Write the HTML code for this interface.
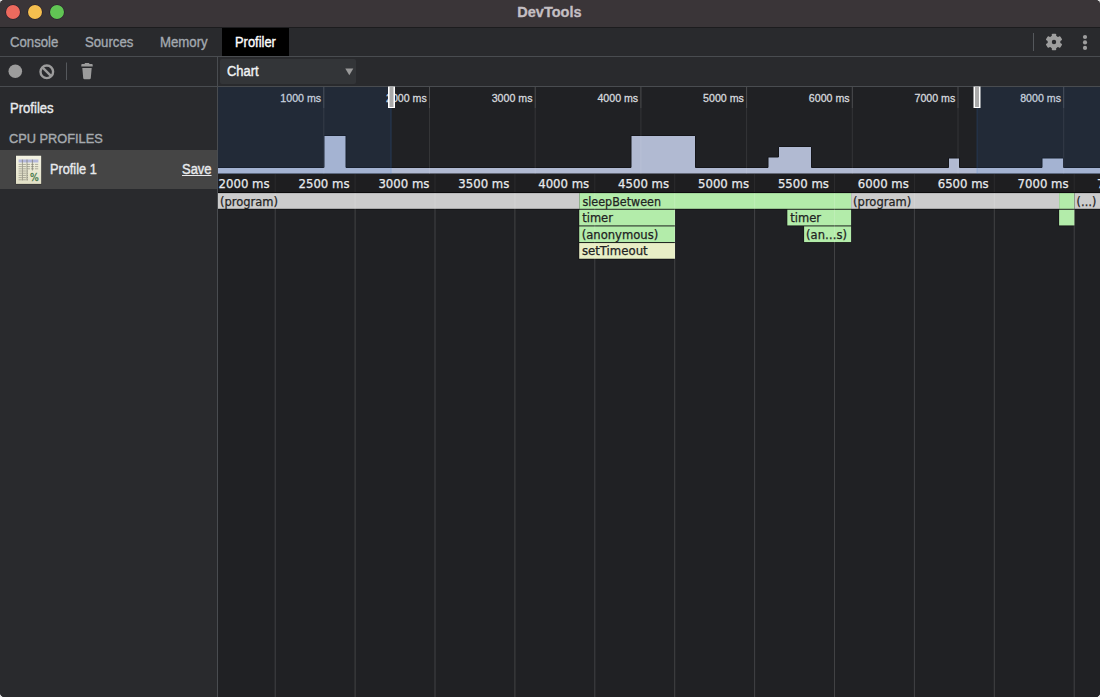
<!DOCTYPE html>
<html lang="en">
<head>
<meta charset="utf-8">
<title>DevTools</title>
<style>
*{box-sizing:border-box;margin:0;padding:0}
html,body{width:1100px;height:697px;overflow:hidden;background:#e2e2e2}
body{font-family:"Liberation Sans",Arial,sans-serif;font-size:14px;color:#e8eaed;position:relative}
.abs{position:absolute}
#win{position:absolute;left:0;top:0;width:1100px;height:697px;background:#202124;border-radius:4.5px;overflow:hidden}
#titlebar{left:0;top:0;width:1100px;height:27px;background:#3a3538}
#titleline{left:0;top:27px;width:1100px;height:1px;background:#1c1c1e}
#title{left:0;top:0;width:1100px;height:27px;line-height:24px;text-align:center;font-weight:bold;font-size:14.5px;color:#c4bfc3;padding-right:1.2px;-webkit-text-stroke:.3px}
.dot{position:absolute;top:4.9px;width:14px;height:14px;border-radius:50%;box-shadow:0 0 0 .6px rgba(20,10,30,.55)}
#tabbar{left:0;top:28px;width:1100px;height:28px;background:#292a2d}
#tabline{left:0;top:56px;width:1100px;height:1px;background:#494c50}
.tab{position:absolute;top:28.7px;height:28px;line-height:27px;font-size:14px;color:#a3a9b0;white-space:nowrap;transform-origin:0 50%;-webkit-text-stroke:.35px}
#tabsel{left:222px;top:28px;width:67px;height:28px;background:#000}
#toolbar{left:0;top:57px;width:1100px;height:29px;background:#292a2d}
#toolline{left:0;top:86px;width:1100px;height:1px;background:#494c50}
#sidebar{left:0;top:87px;width:217px;height:610px;background:#292a2d}
#sideline{left:216.8px;top:57px;width:1.4px;height:640px;background:#494c50}
#selrow{left:0;top:150.4px;width:217px;height:38.3px;background:#454545}
.t{position:absolute;white-space:nowrap;transform-origin:0 50%;-webkit-text-stroke:.4px}
#main{left:218px;top:87px;width:882px;height:610px;background:#202124}
.fl{font-family:"DejaVu Sans","Liberation Sans",sans-serif}
</style>
</head>
<body>
<div id="win">
  <div id="titlebar" class="abs"></div>
  <div id="titleline" class="abs"></div>
  <div id="title" class="abs">DevTools</div>
  <div class="dot" style="left:6px;background:#ed6a5e"></div>
  <div class="dot" style="left:28px;background:#f5bf4f"></div>
  <div class="dot" style="left:50px;background:#61c554"></div>

  <div id="tabbar" class="abs"></div>
  <div id="tabline" class="abs"></div>
  <div id="tabsel" class="abs"></div>
  <div class="tab" style="left:10.2px;transform:scaleX(.94)">Console</div>
  <div class="tab" style="left:85.2px;transform:scaleX(.94)">Sources</div>
  <div class="tab" style="left:160.4px;transform:scaleX(.943)">Memory</div>
  <div class="tab" style="left:235px;color:#fff;transform:scaleX(.921)">Profiler</div>

  <div id="toolbar" class="abs"></div>
  <div id="toolline" class="abs"></div>
  <div id="sidebar" class="abs"></div>
  <div id="selrow" class="abs"></div>
  <div id="sideline" class="abs"></div>

  <div class="t" style="left:10px;top:99.5px;font-size:14.3px;color:#e8eaed;transform:scaleX(.915)">Profiles</div>
  <div class="t" style="left:8.6px;top:131px;font-size:13.6px;color:#a6aaaf;transform:scaleX(.94)">CPU PROFILES</div>
  <div class="t" style="left:49.6px;top:161px;font-size:14px;color:#e8eaed;transform:scaleX(.91)">Profile 1</div>
  <div class="t" style="left:181.8px;top:161px;font-size:14px;color:#e8eaed;text-decoration:underline;transform:scaleX(.925)">Save</div>


  <!-- toolbar icons -->
  <svg class="abs" style="left:0;top:57px" width="217" height="29" viewBox="0 57 217 29">
    <circle cx="15.3" cy="71.3" r="6.8" fill="#9c9c9c"/>
    <circle cx="46.8" cy="71.8" r="6.3" fill="none" stroke="#9c9c9c" stroke-width="2.4"/>
    <line x1="42.4" y1="67.4" x2="51.2" y2="76.2" stroke="#9c9c9c" stroke-width="2.4"/>
    <rect x="66" y="62.5" width="1" height="17.5" fill="#55585c"/>
    <path d="M85.2 63h3.6l0.9 1.1h2.2a0.8 0.8 0 0 1 .8 .8v1.6h-11.4v-1.6a0.8 0.8 0 0 1 .8-.8h2.2z M82.3 68h9.4l-0.9 9.9a1.4 1.4 0 0 1-1.4 1.3h-4.8a1.4 1.4 0 0 1-1.4-1.3z" fill="#9c9c9c"/>
  </svg>
  <div class="abs" id="select" style="left:220px;top:59px;width:135.5px;height:24.5px;background:#333538;border-radius:2px"></div>
  <div class="t" style="left:226.7px;top:62.5px;font-size:14px;color:#f1f3f4;transform:scaleX(.925)">Chart</div>
  <svg class="abs" style="left:345px;top:67.5px" width="9" height="8" viewBox="0 0 9 8"><path d="M0.3 0.4h8L4.3 7.2z" fill="#9a9a9a"/></svg>
  <!-- right tabbar icons -->
  <div class="abs" style="left:1033px;top:33px;width:1px;height:17.5px;background:#55585c"></div>
  <svg class="abs" style="left:1043px;top:31.2px" width="22" height="22" viewBox="-11 -11 22 22">
    <g fill="#9e9e9e">
      <path fill-rule="evenodd" d="M0-6.4A6.4 6.4 0 1 1 0 6.4A6.4 6.4 0 1 1 0-6.4zM0-2.2A2.2 2.2 0 1 0 0 2.2A2.2 2.2 0 1 0 0-2.2z"/>
      <g><rect x="-2.2" y="-8.3" width="4.4" height="3.6" rx="0.8"/><rect x="-2.2" y="4.7" width="4.4" height="3.6" rx="0.8"/></g>
      <g transform="rotate(60)"><rect x="-2.2" y="-8.3" width="4.4" height="3.6" rx="0.8"/><rect x="-2.2" y="4.7" width="4.4" height="3.6" rx="0.8"/></g>
      <g transform="rotate(120)"><rect x="-2.2" y="-8.3" width="4.4" height="3.6" rx="0.8"/><rect x="-2.2" y="4.7" width="4.4" height="3.6" rx="0.8"/></g>
    </g>
  </svg>
  <svg class="abs" style="left:1078px;top:30px" width="14" height="24" viewBox="1078 30 14 24">
    <circle cx="1085" cy="37" r="2.1" fill="#9e9e9e"/><circle cx="1085" cy="42.4" r="2.1" fill="#9e9e9e"/><circle cx="1085" cy="47.9" r="2.1" fill="#9e9e9e"/>
  </svg>
  <!-- profile icon -->
  <svg class="abs" style="left:14px;top:153px" width="30" height="34" viewBox="14 153 30 34">
    <defs><linearGradient id="pg" x1="0" y1="0" x2="0" y2="1"><stop offset="0" stop-color="#f4f3e3"/><stop offset="1" stop-color="#e2e0c6"/></linearGradient></defs>
    <rect x="15.6" y="155.4" width="26" height="29.2" fill="#2a2a2a" opacity=".55"/>
    <rect x="16" y="155.7" width="25.2" height="28.2" fill="url(#pg)"/>
    <rect x="18.6" y="159.5" width="19.8" height="3" fill="#b4b8dc"/>
    <g stroke="#8f8e80" stroke-width="0.7" stroke-dasharray="3.2 0.9">
      <line x1="18.6" y1="164.4" x2="38.4" y2="164.4"/><line x1="18.6" y1="166.6" x2="38.4" y2="166.6"/><line x1="18.6" y1="168.8" x2="38.4" y2="168.8"/>
      <line x1="18.6" y1="171" x2="28" y2="171"/><line x1="18.6" y1="173.2" x2="28" y2="173.2"/><line x1="18.6" y1="175.4" x2="28" y2="175.4"/>
      <line x1="18.6" y1="177.6" x2="28" y2="177.6"/><line x1="18.6" y1="179.8" x2="28" y2="179.8"/>
    </g>
    <g stroke="#77766b" stroke-width="0.65">
      <line x1="22.4" y1="159.5" x2="22.4" y2="180.5"/><line x1="27" y1="159.5" x2="27" y2="180.5"/><line x1="32.4" y1="159.5" x2="32.4" y2="170.5"/>
    </g>
    <text x="30.1" y="180.5" font-family="DejaVu Sans, sans-serif" font-size="9.8" fill="#44784a" stroke="#44784a" stroke-width=".3" textLength="8.8" lengthAdjust="spacingAndGlyphs">%</text>
  </svg>
  <div id="main" class="abs"></div>
<!--CHART-->
<svg id="chart" class="abs" style="left:0;top:0" width="1100" height="697" viewBox="0 0 1100 697">
<rect x="218" y="87" width="882" height="87" fill="#202124"/>
<clipPath id="cm"><rect x="218" y="87" width="882" height="610"/></clipPath>
<path d="M210 167.5 L324 167.5 L324 135.5 L346 135.5 L346 167.5 L631 167.5 L631 135.5 L695.5 135.5 L695.5 167.5 L768 167.5 L768 157.0 L778.5 157.0 L778.5 146.5 L811.5 146.5 L811.5 167.5 L948.5 167.5 L948.5 158.0 L959.5 158.0 L959.5 167.5 L1042 167.5 L1042 158.0 L1063.5 158.0 L1063.5 167.5 L1110 167.5 L1110 174 L210 174Z" fill="#b1bad2" stroke="#15161a" stroke-width="1" clip-path="url(#cm)"/>
<rect x="323.3" y="87" width="1" height="21" fill="#fff" fill-opacity=".2"/>
<rect x="323.3" y="108" width="1" height="66" fill="#fff" fill-opacity=".09"/>
<rect x="429.0" y="87" width="1" height="21" fill="#fff" fill-opacity=".2"/>
<rect x="429.0" y="108" width="1" height="66" fill="#fff" fill-opacity=".09"/>
<rect x="534.7" y="87" width="1" height="21" fill="#fff" fill-opacity=".2"/>
<rect x="534.7" y="108" width="1" height="66" fill="#fff" fill-opacity=".09"/>
<rect x="640.4" y="87" width="1" height="21" fill="#fff" fill-opacity=".2"/>
<rect x="640.4" y="108" width="1" height="66" fill="#fff" fill-opacity=".09"/>
<rect x="746.1" y="87" width="1" height="21" fill="#fff" fill-opacity=".2"/>
<rect x="746.1" y="108" width="1" height="66" fill="#fff" fill-opacity=".09"/>
<rect x="851.8" y="87" width="1" height="21" fill="#fff" fill-opacity=".2"/>
<rect x="851.8" y="108" width="1" height="66" fill="#fff" fill-opacity=".09"/>
<rect x="957.5" y="87" width="1" height="21" fill="#fff" fill-opacity=".2"/>
<rect x="957.5" y="108" width="1" height="66" fill="#fff" fill-opacity=".09"/>
<rect x="1063.2" y="87" width="1" height="21" fill="#fff" fill-opacity=".2"/>
<rect x="1063.2" y="108" width="1" height="66" fill="#fff" fill-opacity=".09"/>
<g font-family="Liberation Sans, Arial, sans-serif" font-size="11.4" fill="#d6d9de" stroke="#d6d9de" stroke-width=".3" text-anchor="end">
<text x="321.1" y="101.5" textLength="40.8" lengthAdjust="spacingAndGlyphs">1000 ms</text>
<text x="426.8" y="101.5" textLength="40.8" lengthAdjust="spacingAndGlyphs">2000 ms</text>
<text x="532.5" y="101.5" textLength="40.8" lengthAdjust="spacingAndGlyphs">3000 ms</text>
<text x="638.2" y="101.5" textLength="40.8" lengthAdjust="spacingAndGlyphs">4000 ms</text>
<text x="743.9" y="101.5" textLength="40.8" lengthAdjust="spacingAndGlyphs">5000 ms</text>
<text x="849.6" y="101.5" textLength="40.8" lengthAdjust="spacingAndGlyphs">6000 ms</text>
<text x="955.3" y="101.5" textLength="40.8" lengthAdjust="spacingAndGlyphs">7000 ms</text>
<text x="1061.0" y="101.5" textLength="40.8" lengthAdjust="spacingAndGlyphs">8000 ms</text>
</g>
<rect x="218" y="87" width="173.5" height="87" fill="#3879d9" fill-opacity=".105"/>
<rect x="977" y="87" width="123" height="87" fill="#3879d9" fill-opacity=".105"/>
<rect x="390.5" y="87" width="1" height="87" fill="#3879d9" fill-opacity=".2"/>
<rect x="976.5" y="87" width="1" height="87" fill="#3879d9" fill-opacity=".2"/>
<rect x="388" y="86.5" width="7" height="21.5" fill="#fff"/>
<rect x="389.5" y="87" width="4" height="20" fill="#aaa"/>
<rect x="973.5" y="86.5" width="7" height="21.5" fill="#fff"/>
<rect x="975.0" y="87" width="4" height="20" fill="#aaa"/>
<rect x="218" y="174" width="882" height="18.5" fill="#1e1e20"/>
<rect x="218" y="192.5" width="882" height="505" fill="#202124"/>
<rect x="218" y="192" width="882" height="1.1" fill="#0c0c0d"/>
<rect x="218.00" y="193.10" width="361.40" height="16.5" fill="#111113"/>
<rect x="578.80" y="193.10" width="272.30" height="16.5" fill="#111113"/>
<rect x="850.50" y="193.10" width="208.60" height="16.5" fill="#111113"/>
<rect x="1058.50" y="193.10" width="15.90" height="16.5" fill="#111113"/>
<rect x="1074.00" y="193.10" width="26.00" height="16.5" fill="#111113"/>
<rect x="578.60" y="209.75" width="96.40" height="16.5" fill="#111113"/>
<rect x="786.70" y="209.75" width="64.40" height="16.5" fill="#111113"/>
<rect x="1058.50" y="209.75" width="15.90" height="16.5" fill="#111113"/>
<rect x="578.60" y="226.40" width="96.40" height="16.5" fill="#111113"/>
<rect x="803.50" y="226.40" width="47.60" height="16.5" fill="#111113"/>
<rect x="578.60" y="243.05" width="96.40" height="16.5" fill="#111113"/>
<rect x="218" y="193.1" width="361.4" height="15.7" fill="#cccccc"/>
<rect x="579.4" y="193.1" width="271.70000000000005" height="15.7" fill="#b3ecaa"/>
<rect x="851.1" y="193.1" width="207.9999999999999" height="15.7" fill="#cccccc"/>
<rect x="1059.1" y="193.1" width="15.300000000000182" height="15.7" fill="#b3ecaa"/>
<rect x="1074.6" y="193.1" width="25.40000000000009" height="15.7" fill="#cccccc"/>
<rect x="579.2" y="209.75" width="95.79999999999995" height="15.7" fill="#b3ecaa"/>
<rect x="787.3" y="209.75" width="63.80000000000007" height="15.7" fill="#b3ecaa"/>
<rect x="1059.1" y="209.75" width="15.300000000000182" height="15.7" fill="#b3ecaa"/>
<rect x="579.2" y="226.39999999999998" width="95.79999999999995" height="15.7" fill="#b3ecaa"/>
<rect x="804.1" y="226.39999999999998" width="47.0" height="15.7" fill="#b3ecaa"/>
<rect x="579.2" y="243.04999999999998" width="95.79999999999995" height="15.7" fill="#e8eec6"/>
<rect x="274.7" y="174" width="1" height="18" fill="#fff" fill-opacity=".06"/>
<rect x="274.7" y="193" width="1" height="504" fill="#fff" fill-opacity=".15"/>
<rect x="354.6" y="174" width="1" height="18" fill="#fff" fill-opacity=".06"/>
<rect x="354.6" y="193" width="1" height="504" fill="#fff" fill-opacity=".15"/>
<rect x="434.5" y="174" width="1" height="18" fill="#fff" fill-opacity=".06"/>
<rect x="434.5" y="193" width="1" height="504" fill="#fff" fill-opacity=".15"/>
<rect x="514.4" y="174" width="1" height="18" fill="#fff" fill-opacity=".06"/>
<rect x="514.4" y="193" width="1" height="504" fill="#fff" fill-opacity=".15"/>
<rect x="594.3" y="174" width="1" height="18" fill="#fff" fill-opacity=".06"/>
<rect x="594.3" y="193" width="1" height="504" fill="#fff" fill-opacity=".15"/>
<rect x="674.2" y="174" width="1" height="18" fill="#fff" fill-opacity=".06"/>
<rect x="674.2" y="193" width="1" height="504" fill="#fff" fill-opacity=".15"/>
<rect x="754.1" y="174" width="1" height="18" fill="#fff" fill-opacity=".06"/>
<rect x="754.1" y="193" width="1" height="504" fill="#fff" fill-opacity=".15"/>
<rect x="834.0" y="174" width="1" height="18" fill="#fff" fill-opacity=".06"/>
<rect x="834.0" y="193" width="1" height="504" fill="#fff" fill-opacity=".15"/>
<rect x="913.9" y="174" width="1" height="18" fill="#fff" fill-opacity=".06"/>
<rect x="913.9" y="193" width="1" height="504" fill="#fff" fill-opacity=".15"/>
<rect x="993.8" y="174" width="1" height="18" fill="#fff" fill-opacity=".06"/>
<rect x="993.8" y="193" width="1" height="504" fill="#fff" fill-opacity=".15"/>
<rect x="1073.7" y="174" width="1" height="18" fill="#fff" fill-opacity=".06"/>
<rect x="1073.7" y="193" width="1" height="504" fill="#fff" fill-opacity=".15"/>
<g font-family="DejaVu Sans, sans-serif" font-size="12.4" fill="#e8eaed" stroke="#e8eaed" stroke-width=".25">
<text x="269.6" y="188" text-anchor="end" textLength="51" lengthAdjust="spacingAndGlyphs">2000 ms</text>
<text x="349.5" y="188" text-anchor="end" textLength="51" lengthAdjust="spacingAndGlyphs">2500 ms</text>
<text x="429.4" y="188" text-anchor="end" textLength="51" lengthAdjust="spacingAndGlyphs">3000 ms</text>
<text x="509.3" y="188" text-anchor="end" textLength="51" lengthAdjust="spacingAndGlyphs">3500 ms</text>
<text x="589.2" y="188" text-anchor="end" textLength="51" lengthAdjust="spacingAndGlyphs">4000 ms</text>
<text x="669.1" y="188" text-anchor="end" textLength="51" lengthAdjust="spacingAndGlyphs">4500 ms</text>
<text x="749.0" y="188" text-anchor="end" textLength="51" lengthAdjust="spacingAndGlyphs">5000 ms</text>
<text x="828.9" y="188" text-anchor="end" textLength="51" lengthAdjust="spacingAndGlyphs">5500 ms</text>
<text x="908.8" y="188" text-anchor="end" textLength="51" lengthAdjust="spacingAndGlyphs">6000 ms</text>
<text x="988.7" y="188" text-anchor="end" textLength="51" lengthAdjust="spacingAndGlyphs">6500 ms</text>
<text x="1068.6" y="188" text-anchor="end" textLength="51" lengthAdjust="spacingAndGlyphs">7000 ms</text>
<text x="1097" y="188">7500 ms</text>
</g>
<g font-family="DejaVu Sans, sans-serif" font-size="11.5" fill="#222" stroke="#222" stroke-width=".25">
<text x="220.0" y="206">(program)</text>
<text x="582.4" y="206" textLength="78.6" lengthAdjust="spacingAndGlyphs">sleepBetween</text>
<text x="853.1" y="206">(program)</text>
<text x="1076.6" y="206" textLength="19.6" lengthAdjust="spacingAndGlyphs">(…)</text>
<text x="582.2" y="222">timer</text>
<text x="790.3" y="222">timer</text>
<text x="581.7" y="239" textLength="76.6" lengthAdjust="spacingAndGlyphs">(anonymous)</text>
<text x="806.1" y="239">(an…s)</text>
<text x="581.9" y="255" textLength="65.8" lengthAdjust="spacingAndGlyphs">setTimeout</text>
</g>
</svg>
<!--/CHART-->
</div>
</body>
</html>
